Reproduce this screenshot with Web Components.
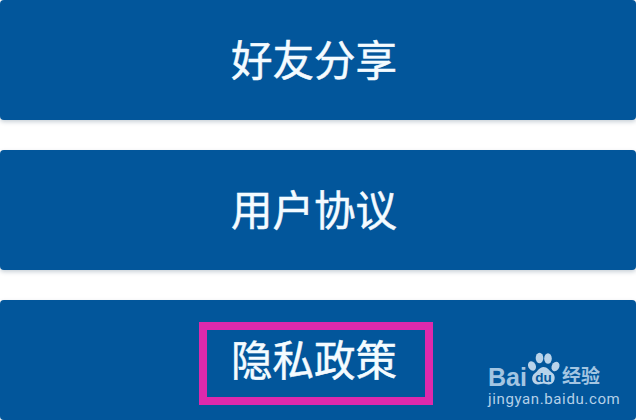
<!DOCTYPE html>
<html lang="zh">
<head>
<meta charset="utf-8">
<title>设置</title>
<style>
    html, body { margin: 0; height: 100%; background: #fff; overflow: hidden; }
</style>
</head>
<body>
<menu-page>
    <menu-bar>好友分享</menu-bar>
    <menu-bar>用户协议</menu-bar>
    <menu-bar marked>隐私政策</menu-bar>
    <jy-watermark slot="overlay"></jy-watermark>
</menu-page>

<script>
(function () {

    const pageTemplate = document.createElement('template');
    pageTemplate.innerHTML = `
        <style>
            :host {
                display: flex;
                flex-direction: column;
                gap: 30px;
                position: relative;
                width: 636px;
                height: 420px;
                overflow: hidden;
                background-color: #ffffff;
                font-family: "Roboto", "Noto Sans CJK SC", sans-serif;
            }
        </style>
        <slot></slot>
        <slot name="overlay"></slot>
    `;

    const barTemplate = document.createElement('template');
    barTemplate.innerHTML = `
        <style>
            :host {
                display: flex;
                align-items: center;
                justify-content: center;
                flex: none;
                box-sizing: border-box;
                height: 120px;
                padding: 0 8px 2px 0;
                border-radius: 4px;
                background-color: #02569b;
                box-shadow: 0 2px 4px rgba(40, 70, 100, 0.25);
                color: #f4fbff;
                font-family: "Noto Sans CJK SC", sans-serif;
                font-size: 41.5px;
                font-weight: 400;
                -webkit-text-stroke: 0.5px #f4fbff;
                line-height: 1;
            }

            .label {
                position: relative;
            }

            /* pink annotation drawn over the last row */
            :host([marked]) .label::after {
                content: '';
                position: absolute;
                left: -31.5px;
                right: -35.5px;
                top: -16px;
                bottom: -25px;
                border: 8px solid #dd29ac;
            }
        </style>
        <span class="label"><slot></slot></span>
    `;

    const markTemplate = document.createElement('template');
    markTemplate.innerHTML = `
        <style>
            :host {
                position: absolute;
                left: 488px;
                top: 352px;
                width: 116px;
                height: 56px;
                color: #a3c5e2;
            }

            .bai, .jy, .site { position: absolute; white-space: nowrap; line-height: 1; }

            .bai {
                left: 0;
                top: 13px;
                font: bold 25px "Liberation Sans", sans-serif;
                line-height: 1;
            }

            .jy {
                left: 74px;
                top: 12px;
                font: bold 19px "Noto Sans CJK SC", sans-serif;
                line-height: 1.2;
            }

            .site {
                left: 0;
                top: 38px;
                color: #b4d0e8;
                font: 15px "Roboto", sans-serif;
                line-height: 1.2;
                letter-spacing: 0.62px;
            }

            svg { position: absolute; left: 38px; top: 0; }
        </style>
        <span class="bai">Bai</span>
        <svg width="36" height="36" viewBox="0 0 36 36">
            <ellipse cx="6" cy="14" rx="3.8" ry="5" transform="rotate(-25 6 14)" fill="#b9d3ea"/>
            <ellipse cx="13.5" cy="6" rx="3.8" ry="5.200" fill="#b9d3ea"/>
            <ellipse cx="22" cy="6.5" rx="3.8" ry="5.200" fill="#b9d3ea"/>
            <ellipse cx="29.500" cy="14.500" rx="3.8" ry="5" transform="rotate(25 29.500 14.500)" fill="#b9d3ea"/>
            <path d="M17.5 15c4 0 5.500 3.500 9 6 4 3 2.500 11-3.500 11.500-2.500 .2-3.500-1-5.500-1s-3.500 1.200-6 1c-6-.5-7-8-3-11 3.500-2.500 5-6.500 9-6.500z" fill="#b9d3ea"/>
            <text x="17.500" y="29.500" text-anchor="middle" font-family="Liberation Sans, sans-serif" font-size="13.500" font-weight="bold" fill="#02569b">du</text>
        </svg>
        <span class="jy">经验</span>
        <span class="site">jingyan.baidu.com</span>
    `;

    class MenuPage extends HTMLElement {
        constructor() {
            super();
            this.attachShadow({ mode: 'open' });
            this.shadowRoot.appendChild(pageTemplate.content.cloneNode(true));
        }
    }

    class MenuBar extends HTMLElement {
        constructor() {
            super();
            this.attachShadow({ mode: 'open' });
            this.shadowRoot.appendChild(barTemplate.content.cloneNode(true));
        }
    }

    class JyWatermark extends HTMLElement {
        constructor() {
            super();
            this.attachShadow({ mode: 'open' });
            this.shadowRoot.appendChild(markTemplate.content.cloneNode(true));
        }
    }

    window.customElements.define('menu-page', MenuPage);
    window.customElements.define('menu-bar', MenuBar);
    window.customElements.define('jy-watermark', JyWatermark);

})();
</script>
</body>
</html>
